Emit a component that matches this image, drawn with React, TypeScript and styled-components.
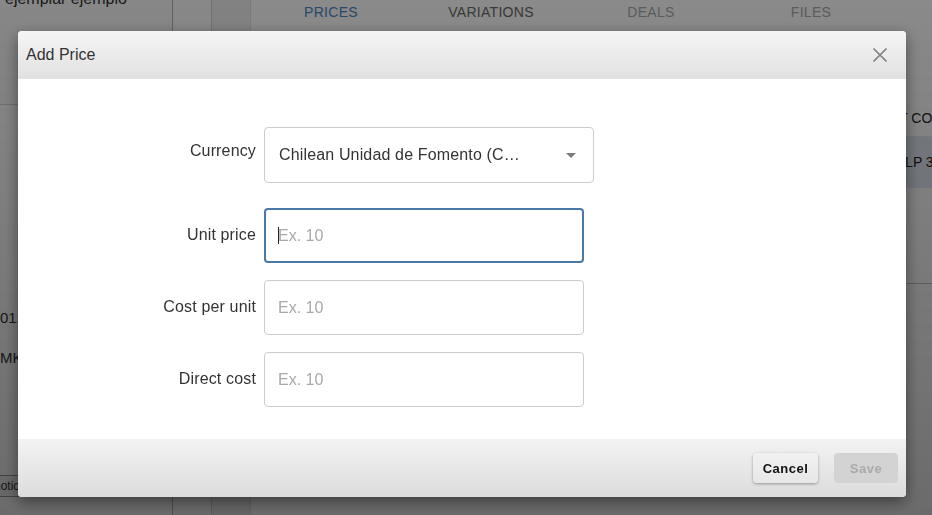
import React from "react";
import styled, { createGlobalStyle } from "styled-components";

const GlobalStyle = createGlobalStyle`
  html, body { margin: 0; padding: 0; }
  body {
    font-family: "Liberation Sans", Arial, Helvetica, sans-serif;
    background: #fff;
    overflow: hidden;
  }
  * { box-sizing: border-box; }
`;

/* ---------- background page ---------- */

const Page = styled.div`
  display: flex;
  width: 932px;
  height: 515px;
  overflow: hidden;
  background: #fff;
`;

const Sidebar = styled.aside`
  width: 173px;
  flex: none;
  display: flex;
  flex-direction: column;
  border-right: 1px solid #b3b3b3;
`;

const SidebarHead = styled.div`
  height: 105px;
  flex: none;
  border-bottom: 1px solid #d6d6d6;
  background: #fafafa;
`;

const OwnerName = styled.div`
  margin-top: -10px;
  padding-left: 5px;
  font-size: 16px;
  line-height: 18px;
  color: #333;
`;

const SidebarList = styled.div`
  flex: 1;
  display: flex;
  flex-direction: column;
  padding-top: 200px;
`;

const SidebarItem = styled.div`
  height: 40px;
  line-height: 26px;
  font-size: 15px;
  color: #333;
  white-space: nowrap;
`;

const SidebarFoot = styled.div`
  height: 40px;
  flex: none;
  padding-bottom: 18px;
  display: flex;
  align-items: flex-end;
`;

const GhostButton = styled.div`
  margin-left: -35px;
  width: 66px;
  height: 22px;
  border: 1px solid #9a9a9a;
  border-radius: 0 0 3px 0;
  padding-left: 6px;
  font-size: 12px;
  line-height: 20px;
  color: #333;
  background: #f4f4f4;
  white-space: nowrap;
  overflow: hidden;
`;

const Rail = styled.div<{ $shade?: boolean }>`
  width: 39px;
  flex: none;
  border-right: 1px solid ${(p) => (p.$shade ? "#e2e2e2" : "#d4d4d4")};
  background: ${(p) => (p.$shade ? "#f1f1f1" : "#fbfbfb")};
`;

const Main = styled.main`
  flex: 1;
  display: flex;
  flex-direction: column;
  min-width: 0;
`;

const TabBar = styled.nav`
  display: flex;
  height: 24px;
  flex: none;
`;

const Tab = styled.div<{ $state: "active" | "normal" | "disabled" }>`
  width: 160px;
  text-align: center;
  font-size: 14px;
  letter-spacing: 0.3px;
  line-height: 24px;
  color: ${(p) =>
    p.$state === "active" ? "#4a86c8" : p.$state === "normal" ? "#6a6a6a" : "#ababab"};
`;

const Table = styled.div`
  margin-top: 76px;
  display: flex;
  flex-direction: column;
`;

const TableRow = styled.div<{ $head?: boolean; $selected?: boolean }>`
  display: grid;
  grid-template-columns: 156px 156px 156px 156px 1fr;
  align-items: center;
  height: ${(p) => (p.$head ? "36px" : "52px")};
  background: ${(p) => (p.$selected ? "#e2e9f4" : "transparent")};
  font-size: 14px;
  color: #222;
  white-space: nowrap;
`;

const Cell = styled.div<{ $indent?: number }>`
  padding-left: ${(p) => p.$indent ?? 0}px;
  overflow: hidden;
`;

const TableSection = styled.div`
  height: 96px;
  border-bottom: 1px solid #c4c4c4;
`;

/* ---------- modal ---------- */

const Backdrop = styled.div`
  position: fixed;
  inset: 0;
  background: linear-gradient(180deg, rgba(0, 0, 0, 0.46) 0%, rgba(0, 0, 0, 0.58) 100%);
  padding: 31px 0 0 18px;
`;

const Dialog = styled.div`
  width: 888px;
  height: 466px;
  display: flex;
  flex-direction: column;
  background: #fff;
  border-radius: 4px;
  overflow: hidden;
  box-shadow: 0 5px 15px rgba(0, 0, 0, 0.45);
`;

const DialogHeader = styled.header`
  height: 48px;
  flex: none;
  display: flex;
  align-items: center;
  justify-content: space-between;
  padding: 0 19px 0 8px;
  background: linear-gradient(180deg, #f5f5f5 0%, #e1e1e1 100%);
`;

const DialogTitle = styled.h4`
  margin: 0;
  font-size: 16px;
  font-weight: normal;
  color: #333;
`;

const CloseButton = styled.button`
  width: 14px;
  height: 14px;
  padding: 0;
  border: none;
  background: none;
  display: flex;
  cursor: pointer;
`;

const DialogBody = styled.div`
  flex: 1;
  padding-top: 48px;
`;

const Form = styled.div`
  display: grid;
  grid-template-columns: 238px auto;
  column-gap: 8px;
  row-gap: 17px;
  align-items: start;
  justify-content: start;
`;

const Label = styled.label<{ $top: number }>`
  text-align: right;
  font-size: 16px;
  letter-spacing: 0.15px;
  line-height: 20px;
  color: #333;
  padding-top: ${(p) => p.$top}px;
  white-space: nowrap;
`;

const Select = styled.div`
  width: 330px;
  height: 56px;
  margin-bottom: 8px;
  border: 1px solid #cccccc;
  border-radius: 4px;
  padding: 0 17px 0 14px;
  display: flex;
  align-items: center;
  justify-content: space-between;
  font-size: 16px;
  letter-spacing: 0.15px;
  color: #333;
  background: #fff;
`;

const SelectCaret = styled.span`
  width: 0;
  height: 0;
  border-left: 5px solid transparent;
  border-right: 5px solid transparent;
  border-top: 5px solid #7c7c7c;
`;

const FieldWrap = styled.div`
  position: relative;
  width: 320px;
  height: 55px;
`;

const Input = styled.input<{ $focused?: boolean }>`
  width: 100%;
  height: 100%;
  border: ${(p) => (p.$focused ? "2px solid #4a78a8" : "1px solid #cccccc")};
  border-radius: 4px;
  padding: 0 0 0 ${(p) => (p.$focused ? 12 : 13)}px;
  font-family: inherit;
  font-size: 16px;
  color: #333;
  outline: none;
  background: #fff;
  &::placeholder {
    color: #a9a9a9;
  }
`;

const TextCaret = styled.span`
  position: absolute;
  left: 14px;
  top: 19px;
  width: 1px;
  height: 17px;
  background: #222;
`;

const DialogFooter = styled.footer`
  height: 58px;
  flex: none;
  display: flex;
  align-items: center;
  justify-content: flex-end;
  gap: 16px;
  padding-right: 8px;
  background: linear-gradient(180deg, #f3f3f3 0%, #dcdcdc 100%);
`;

const Button = styled.button<{ $disabled?: boolean }>`
  height: 30px;
  width: ${(p) => (p.$disabled ? "64px" : "65px")};
  border: none;
  border-radius: 4px;
  font-family: inherit;
  font-size: 13px;
  font-weight: bold;
  letter-spacing: 0.5px;
  color: ${(p) => (p.$disabled ? "#a9a9a9" : "#111")};
  background: ${(p) =>
    p.$disabled ? "#d3d3d3" : "linear-gradient(180deg, #f1f1f1 0%, #e7e7e7 100%)"};
  box-shadow: ${(p) => (p.$disabled ? "none" : "0 1px 3px rgba(0, 0, 0, 0.35)")};
  cursor: ${(p) => (p.$disabled ? "default" : "pointer")};
`;

const CloseIcon = () => (
  <svg width="14" height="14" viewBox="0 0 14 14" fill="none">
    <path d="M0.5 0.5 L13.5 13.5 M13.5 0.5 L0.5 13.5" stroke="#858585" strokeWidth="1.6" />
  </svg>
);

export default function App() {
  return (
    <>
      <GlobalStyle />
      <Page>
        <Sidebar>
          <SidebarHead>
            <OwnerName>ejemplar ejemplo</OwnerName>
          </SidebarHead>
          <SidebarList>
            <SidebarItem>01234 5678</SidebarItem>
            <SidebarItem>MKT-2020</SidebarItem>
          </SidebarList>
          <SidebarFoot>
            <GhostButton>Promotion</GhostButton>
          </SidebarFoot>
        </Sidebar>
        <Rail />
        <Rail $shade />
        <Main>
          <TabBar>
            <Tab $state="active">PRICES</Tab>
            <Tab $state="normal">VARIATIONS</Tab>
            <Tab $state="disabled">DEALS</Tab>
            <Tab $state="disabled">FILES</Tab>
          </TabBar>
          <Table>
            <TableRow $head>
              <Cell $indent={16}>NAME</Cell>
              <Cell>CURRENCY</Cell>
              <Cell>PRICE</Cell>
              <Cell>DISCOUNT</Cell>
              <Cell>UNIT COST</Cell>
            </TableRow>
            <TableRow $selected>
              <Cell $indent={16}>Default</Cell>
              <Cell>CLP</Cell>
              <Cell>3.500</Cell>
              <Cell>0</Cell>
              <Cell $indent={20}>CLP 3.000</Cell>
            </TableRow>
            <TableSection />
          </Table>
        </Main>
      </Page>

      <Backdrop>
        <Dialog role="dialog" aria-label="Add Price">
          <DialogHeader>
            <DialogTitle>Add Price</DialogTitle>
            <CloseButton aria-label="Close">
              <CloseIcon />
            </CloseButton>
          </DialogHeader>
          <DialogBody>
            <Form>
              <Label $top={14}>Currency</Label>
              <Select>
                <span>Chilean Unidad de Fomento (C…</span>
                <SelectCaret />
              </Select>

              <Label $top={17}>Unit price</Label>
              <FieldWrap>
                <Input $focused placeholder="Ex. 10" />
                <TextCaret />
              </FieldWrap>

              <Label $top={17}>Cost per unit</Label>
              <FieldWrap>
                <Input placeholder="Ex. 10" />
              </FieldWrap>

              <Label $top={17}>Direct cost</Label>
              <FieldWrap>
                <Input placeholder="Ex. 10" />
              </FieldWrap>
            </Form>
          </DialogBody>
          <DialogFooter>
            <Button>Cancel</Button>
            <Button $disabled disabled>
              Save
            </Button>
          </DialogFooter>
        </Dialog>
      </Backdrop>
    </>
  );
}
